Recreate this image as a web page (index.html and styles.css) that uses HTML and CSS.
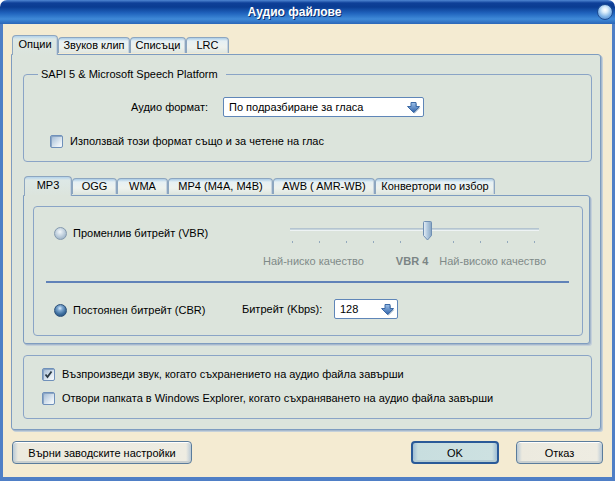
FILE: index.html
```html
<!DOCTYPE html>
<html lang="bg">
<head>
<meta charset="utf-8">
<title>Аудио файлове</title>
<link rel="stylesheet" href="styles.css">
</head>
<body>
<div class="window">
  <div class="titlebar">
    <span class="title">Аудио файлове</span>
    <span class="tb-btn"></span>
  </div>
  <div class="client">
    <div class="tabstrip top-tabs">
      <div class="tab active t-opts">Опции</div>
      <div class="tab t-clip">Звуков клип</div>
      <div class="tab t-lists">Списъци</div>
      <div class="tab t-lrc">LRC</div>
    </div>
    <div class="panel main-panel">
      <fieldset class="group sapi">
        <legend>SAPI 5 &amp; Microsoft Speech Platform</legend>
        <div class="fmt-row">
          <span class="fmt-label">Аудио формат:</span>
          <div class="combo combo-wide">
            <span class="combo-text">По подразбиране за гласа</span>
            <svg class="combo-arrow" width="15" height="13" viewBox="0 0 15 13"><defs><linearGradient id="ag1" x1="0" y1="0" x2="0" y2="1"><stop offset="0" stop-color="#9cc0ea"/><stop offset="1" stop-color="#2f62a8"/></linearGradient></defs><path d="M5 1.5H10V5.5H13.5L7.5 11.5L1.5 5.5H5Z" fill="#9db2c8" transform="translate(1,1)"/><path d="M5 1.5H10V5.5H13.5L7.5 11.5L1.5 5.5H5Z" fill="url(#ag1)" stroke="#3d6aa6" stroke-width="1"/></svg>
          </div>
        </div>
        <div class="check-row sapi-check">
          <span class="checkbox"></span>
          <span>Използвай този формат също и за четене на глас</span>
        </div>
      </fieldset>

      <div class="tabstrip sub-tabs">
        <div class="tab active s-mp3">MP3</div>
        <div class="tab s-ogg">OGG</div>
        <div class="tab s-wma">WMA</div>
        <div class="tab s-mp4">MP4 (M4A, M4B)</div>
        <div class="tab s-awb">AWB ( AMR-WB)</div>
        <div class="tab s-conv">Конвертори по избор</div>
      </div>
      <div class="panel sub-panel">
        <div class="inner-group">
          <div class="vbr-row">
            <div class="radio-label vbr-label">
              <span class="radio"></span>
              <span>Променлив битрейт (VBR)</span>
            </div>
            <div class="slider-col">
              <div class="slider">
                <div class="track"></div>
                <svg class="thumb" width="11" height="20" viewBox="0 0 11 20"><defs><linearGradient id="tg" x1="0" y1="0" x2="1" y2="0"><stop offset="0" stop-color="#e8f0f6"/><stop offset="0.5" stop-color="#b0c8de"/><stop offset="1" stop-color="#86a4c2"/></linearGradient></defs><path d="M1.5 1.5Q1.5 0.5 2.5 0.5H8.5Q9.5 0.5 9.5 1.5V14.5L5.5 19L1.5 14.5Z" fill="url(#tg)" stroke="#6f8fb3"/></svg>
              </div>
              <div class="ticks">
                <i></i><i></i><i></i><i></i><i></i><i class="hidden"></i><i></i><i></i><i></i><i></i>
              </div>
              <div class="slider-labels">
                <span class="lo">Най-ниско качество</span>
                <span class="val">VBR 4</span>
                <span class="hi">Най-високо качество</span>
              </div>
            </div>
          </div>
          <div class="separator"></div>
          <div class="cbr-row">
            <div class="radio-label cbr-label">
              <span class="radio checked"></span>
              <span>Постоянен битрейт (CBR)</span>
            </div>
            <span class="kbps-label">Битрейт (Kbps):</span>
            <div class="combo combo-small">
              <span class="combo-text">128</span>
              <svg class="combo-arrow" width="15" height="13" viewBox="0 0 15 13"><defs><linearGradient id="ag2" x1="0" y1="0" x2="0" y2="1"><stop offset="0" stop-color="#9cc0ea"/><stop offset="1" stop-color="#2f62a8"/></linearGradient></defs><path d="M5 1.5H10V5.5H13.5L7.5 11.5L1.5 5.5H5Z" fill="#9db2c8" transform="translate(1,1)"/><path d="M5 1.5H10V5.5H13.5L7.5 11.5L1.5 5.5H5Z" fill="url(#ag2)" stroke="#3d6aa6" stroke-width="1"/></svg>
            </div>
          </div>
        </div>
      </div>

      <div class="group bottom-group">
        <div class="check-row">
          <span class="checkbox checked"><svg width="11" height="11" viewBox="0 0 11 11"><path d="M2.5 5.5L4.5 8L8.5 2.5" fill="none" stroke="#2b3a45" stroke-width="1.8"/></svg></span>
          <span>Възпроизведи звук, когато съхранението на аудио файла завърши</span>
        </div>
        <div class="check-row">
          <span class="checkbox"></span>
          <span>Отвори папката в Windows Explorer, когато съхраняването на аудио файла завърши</span>
        </div>
      </div>
    </div>

    <div class="buttons">
      <button class="btn btn-reset">Върни заводските настройки</button>
      <div class="btn-right">
        <button class="btn btn-ok">OK</button>
        <button class="btn btn-cancel">Отказ</button>
      </div>
    </div>
  </div>
</div>
</body>
</html>
```

FILE: styles.css
```css
* { box-sizing: border-box; }
html, body { margin: 0; padding: 0; background: #ffffff; }
body {
  font-family: "Liberation Sans", Arial, sans-serif;
  font-size: 11px;
  line-height: 13px;
  color: #000;
}
.window {
  width: 615px;
  height: 481px;
  display: flex;
  flex-direction: column;
}
.titlebar {
  height: 24px;
  flex: none;
  border-radius: 7px 7px 0 0;
  background: linear-gradient(#4f86d2 0px, #0e3f98 3px, #0a3c92 7px, #1f62bc 13px, #3f8ad8 19px, #2a66b8 24px);
  display: flex;
  align-items: center;
  justify-content: center;
  position: relative;
}
.title {
  color: #fff;
  font-weight: bold;
  font-size: 12px;
  margin-left: -26px;
  text-shadow: 1px 1px 0 #0a2f70;
}
.tb-btn {
  position: absolute;
  right: 2px;
  top: 4px;
  width: 16px;
  height: 16px;
  border-radius: 50%;
  background: radial-gradient(circle at 50% 35%, #ffffff 0, #d8ecfa 25%, #7fb3e6 60%, #3d78c4 100%);
  border: 1px solid #1e4c92;
}
.client {
  flex: 1;
  background: #f4ebd2;
  border: 3px solid #4f7fc6;
  border-top: none;
  border-bottom-width: 4px;
  padding: 11px 9px 0 8px;
  display: flex;
  flex-direction: column;
}

/* tabs */
.tabstrip {
  display: flex;
  align-items: flex-end;
  height: 19px;
  position: relative;
  z-index: 2;
}
.top-tabs { margin-left: 1px; }
.tab {
  height: 16px;
  border: 1px solid #8da6c0;
  border-bottom: none;
  border-radius: 4px 4px 0 0;
  background: linear-gradient(#a9cbe6 0, #e6f0f4 3px, #eef2ee 60%, #dfe6e0 100%);
  text-align: center;
  white-space: nowrap;
  padding-top: 1px;
  margin-bottom: 1px;
  box-shadow: inset -1px 0 0 #c6d3de;
}
.tab.active {
  background: linear-gradient(#b2d2ec 0, #dde8e6 3px, #dce4dc 100%);
  padding-top: 2px;
  margin-bottom: -1px;
  height: 20px;
}
.t-opts { width: 46px; }
.t-clip { width: 72px; }
.t-lists { width: 56px; }
.t-lrc { width: 43px; }

.s-mp3 { width: 48px; }
.s-ogg { width: 45px; }
.s-wma { width: 51px; }
.s-mp4 { width: 105px; }
.s-awb { width: 102px; }
.s-conv { width: 120px; }

.panel {
  background: #dce4dc;
  border: 1px solid #7e9cc0;
  border-radius: 0 3px 3px 3px;
  box-shadow: 1px 1px 0 #a6b8cc, 2px 2px 0 #c4d0da;
  position: relative;
  z-index: 1;
}
.main-panel {
  width: 590px;
  height: 376px;
  padding: 13px 8px 0 11px;
  display: flex;
  flex-direction: column;
}

/* groups */
.group {
  border: 1px solid #8aa4c6;
  border-radius: 4px;
}
fieldset.sapi {
  margin: 0;
  padding: 0 0 13px 0;
  width: 569px;
}
fieldset.sapi legend {
  margin-left: 14px;
  padding: 0 8px 0 3px;
}
.fmt-row {
  display: flex;
  align-items: center;
  margin-top: 16px;
}
.fmt-label {
  width: 184px;
  text-align: right;
  margin-right: 15px;
}
.combo {
  height: 20px;
  background: #fff;
  border: 1px solid #5f86b8;
  border-radius: 2px;
  display: flex;
  align-items: center;
  justify-content: space-between;
  padding: 0 2px 0 5px;
}
.combo-wide { width: 201px; }
.combo-small { width: 64px; }
.combo-arrow { display: block; margin-top: 1px; }

.check-row {
  display: flex;
  align-items: center;
  gap: 7px;
}
.sapi-check {
  margin-top: 18px;
  margin-left: 26px;
}
.checkbox {
  width: 13px;
  height: 13px;
  flex: none;
  border: 1px solid #6f90ba;
  border-radius: 2px;
  background: linear-gradient(135deg, #9fb7d2 0%, #c6d6e6 40%, #e9f0f6 75%, #f6f9fb 100%);
  box-shadow: inset 1px 1px 0 #8aa5c4;
  display: flex;
  align-items: center;
  justify-content: center;
}
.checkbox svg { display: block; }

/* sub tabs */
.sub-tabs { margin-top: 14px; margin-left: 1px; }
.sub-panel {
  width: 567px;
  height: 149px;
  padding: 10px 0 0 9px;
}
.inner-group {
  width: 550px;
  height: 130px;
  border: 1px solid #8aa4c6;
  border-radius: 4px;
  padding: 14px 0 0 20px;
}
.vbr-row {
  display: flex;
  align-items: flex-start;
}
.radio-label {
  display: flex;
  align-items: center;
  gap: 6px;
  flex: none;
}
.vbr-label { width: 208px; margin-top: 6px; }
.radio {
  width: 13px;
  height: 13px;
  border-radius: 50%;
  flex: none;
  border: 1px solid #8499ae;
  background: radial-gradient(circle at 45% 35%, #f4f8fb 0, #d2dee8 30%, #a3b8cb 75%, #7f97ae 100%);
}
.radio.checked {
  border-color: #2b4f78;
  background: radial-gradient(circle at 45% 30%, #d8ecff 0, #7fa8d0 25%, #3d6e9e 60%, #1e4670 100%);
}
.slider-col { width: 290px; }
.slider {
  position: relative;
  height: 20px;
  margin-left: 28px;
  width: 249px;
}
.track {
  position: absolute;
  left: 0;
  right: 0;
  top: 7px;
  height: 3px;
  background: #c6d4dc;
  border-top: 1px solid #b4c4d0;
  border-bottom: 1px solid #eef3f4;
}
.thumb {
  position: absolute;
  left: 132px;
  top: 0;
  display: block;
}
.ticks {
  display: flex;
  justify-content: space-between;
  margin-left: 30px;
  width: 243px;
  height: 3px;
}
.ticks i {
  width: 1px;
  height: 2px;
  background: #93a9bd;
}
.ticks i.hidden { visibility: hidden; }
.slider-labels {
  display: flex;
  margin-top: 11px;
  margin-left: 1px;
  color: #7f8a88;
  white-space: nowrap;
}
.slider-labels .val {
  font-weight: bold;
  margin-left: 32px;
  color: #7b8585;
}
.slider-labels .hi { margin-left: 11px; }

.separator {
  height: 2px;
  background: #6082b8;
  margin: 13px 0 0 -8px;
  width: 523px;
}
.cbr-row {
  display: flex;
  align-items: center;
  margin-top: 16px;
}
.cbr-label { width: 188px; margin-top: 3px; }
.kbps-label { width: 92px; }

/* bottom group */
.bottom-group {
  margin-top: 11px;
  width: 569px;
  height: 64px;
  padding: 12px 0 0 18px;
  display: flex;
  flex-direction: column;
  gap: 11px;
}

/* buttons */
.buttons {
  display: flex;
  justify-content: space-between;
  margin-top: 11px;
  padding-left: 1px;
}
.btn-right { display: flex; gap: 17px; }
.btn {
  font-family: "Liberation Sans", Arial, sans-serif;
  font-size: 11px;
  height: 23px;
  border: 1px solid #5a7c9c;
  border-radius: 4px;
  background: linear-gradient(90deg, #b9c9d6 0, #eceadf 5px, #eeece2 calc(100% - 5px), #b9c9d6 100%);
  box-shadow: inset 0 1px 0 #ffffff, inset 0 -2px 0 #c9cfcf;
  padding: 0;
  color: #000;
}
.btn-reset { width: 180px; }
.btn-ok {
  width: 88px;
  border: 2px solid #2a5a98;
  background: linear-gradient(90deg, #9fbed4 0, #c8dedf 5px, #cde1e1 calc(100% - 5px), #9fbed4 100%);
  box-shadow: inset 0 -2px 0 #b5ccd3;
}
.btn-cancel { width: 87px; }
```
